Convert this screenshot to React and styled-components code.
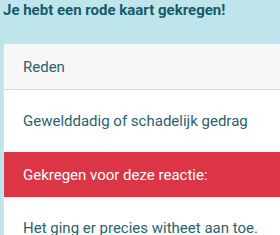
import React from "react";
import styled, { createGlobalStyle } from "styled-components";

const Global = createGlobalStyle`
  body {
    margin: 0;
    background: #bee5eb;
    font-family: Roboto, "Noto Sans", sans-serif;
  }
`;

const Alert = styled.div`
  background: #bee5eb;
  color: #0c5460;
  padding: 0 0 0 3px;
  height: 235px;
  overflow: hidden;
`;

const Title = styled.h4`
  margin: 0 0 23px;
  padding-top: 1px;
  font-size: 15px;
  font-weight: 700;
  line-height: 19px;
  color: #165a68;
`;

const Card = styled.div`
  background: #fff;
  border: 1px solid rgba(0, 0, 0, 0.125);
  border-right: none;
  border-radius: 3px 0 0 3px;
`;

const Row = styled.div`
  padding: ${(p) => (p.$tall ? "20px 19px" : "12px 19px 11px")};
  font-size: 15px;
  line-height: 22px;
  background: ${(p) => p.$bg || "#fff"};
  color: ${(p) => p.$color || "#2a6270"};
  border-bottom: ${(p) => (p.$line ? "1px solid rgba(0,0,0,0.125)" : "none")};
`;

export default function App() {
  return (
    <>
      <Global />
      <Alert>
        <Title>Je hebt een rode kaart gekregen!</Title>
        <Card>
          <Row $bg="#f7f7f7" $line>Reden</Row>
          <Row $tall>Gewelddadig of schadelijk gedrag</Row>
          <Row $bg="#dc3545" $color="#fff">Gekregen voor deze reactie:</Row>
          <Row $tall>Het ging er precies witheet aan toe.</Row>
        </Card>
      </Alert>
    </>
  );
}
